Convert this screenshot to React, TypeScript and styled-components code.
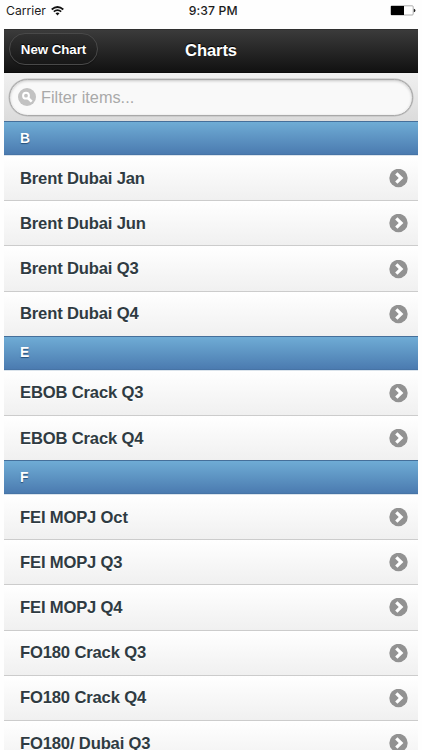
import React from "react";
import styled, { createGlobalStyle } from "styled-components";

const GlobalStyle = createGlobalStyle`
  * { box-sizing: border-box; }
  html, body { margin: 0; background: #fff; }
  body { font-family: "Liberation Sans", Arial, sans-serif; overflow: hidden; }
`;

const Screen = styled.div`
  width: 422px;
  height: 750px;
  overflow: hidden;
  background: #fefefe;
`;

const StatusBar = styled.div`
  height: 28.5px;
  padding: 0 6px 6.5px;
  display: grid;
  grid-template-columns: 1fr auto 1fr;
  align-items: center;
  color: #1c1c1c;
`;

const Carrier = styled.div`
  display: flex;
  align-items: center;
  gap: 5px;
  font: 12.2px/22px Inter, sans-serif;
  letter-spacing: 0;
`;

const Clock = styled.div`
  padding-left: 4.5px;
  font: 500 12.2px/22px Inter, sans-serif;
  letter-spacing: 0.15px;
`;

const BatteryIcon = styled.svg`
  justify-self: end;
  margin-top: -1px;
`;

const Page = styled.main`
  margin: 0 4px;
  width: 414px;
`;

const Header = styled.header`
  height: 44.7px;
  padding: 0 5px;
  display: grid;
  grid-template-columns: 1fr auto 1fr;
  align-items: center;
  color: #fff;
  border-top: 1px solid #303030;
  border-bottom: 1px solid #0b0b0b;
  background: linear-gradient(#3b3b3b, #111);
  text-shadow: 0 -1px 1px #000;
`;

const Title = styled.h1`
  margin: 0;
  font-size: 16.6px;
  line-height: 22px;
  font-weight: 700;
  letter-spacing: -0.1px;
`;

const HeaderButton = styled.button`
  justify-self: start;
  width: 89px;
  height: 32px;
  margin-top: -4px;
  padding: 1px 0 0;
  border: 1px solid #494949;
  border-radius: 16px;
  background: linear-gradient(#303030, #171717);
  color: #fff;
  font: 700 13.3px "Liberation Sans", Arial, sans-serif;
  letter-spacing: -0.05px;
  text-shadow: 0 -1px 1px #000;
  box-shadow: 0 1px 1px rgba(0, 0, 0, 0.3);
`;

const FilterBar = styled.div`
  height: 48px;
  padding: 5.5px 5px 0;
  background: linear-gradient(#f0f0f0, #dbdbdb);
`;

const SearchField = styled.label`
  height: 37px;
  padding: 0 8px;
  display: flex;
  align-items: center;
  gap: 5px;
  border: 1px solid #a9a9a9;
  border-radius: 19px;
  background: #f9f9f9;
  box-shadow: inset 0 1px 3px rgba(0, 0, 0, 0.2), 0 0 0 0.5px #bbb;
`;

const SearchInput = styled.input`
  flex: 1;
  min-width: 0;
  padding: 1px 0 0;
  border: 0;
  outline: 0;
  background: transparent;
  font: 16.3px "Liberation Sans", Arial, sans-serif;
  &::placeholder { color: #a9a9a9; opacity: 1; }
`;

const List = styled.ul`
  list-style: none;
  margin: 0;
  padding: 0;
`;

const Divider = styled.li`
  height: 33.9px;
  padding: 0 16px;
  display: flex;
  align-items: center;
  border-top: 1px solid #456f9a;
  border-bottom: 1px solid #4774a6;
  background: linear-gradient(#6facd5, #4b7bb0);
  color: #fff;
  font-size: 13.8px;
  font-weight: 700;
  text-shadow: 0 1px 1px #254f7a;
`;

const Row = styled.li`
  height: 45.2px;
  padding: 1px 10px 0 16px;
  display: flex;
  align-items: center;
  justify-content: space-between;
  border-top: 1px solid #ccc;
  background: linear-gradient(#fff, #f0f0f0);
  color: #2f3b42;
  font-size: 16.6px;
  letter-spacing: -0.16px;
  font-weight: 700;
  text-shadow: 0 1px 0 #fff;
  ${Divider} + & { border-top-color: #dbe4ec; }
`;

const sections = [
  { letter: "B", items: ["Brent Dubai Jan", "Brent Dubai Jun", "Brent Dubai Q3", "Brent Dubai Q4"] },
  { letter: "E", items: ["EBOB Crack Q3", "EBOB Crack Q4"] },
  { letter: "F", items: ["FEI MOPJ Oct", "FEI MOPJ Q3", "FEI MOPJ Q4", "FO180 Crack Q3", "FO180 Crack Q4", "FO180/ Dubai Q3"] },
];

const WifiIcon = () => (
  <svg width="13" height="10" viewBox="0 0 13 10" fill="none" stroke="#111" strokeWidth="1.7">
    <path d="M.7 3.5Q6.5-1.5 12.3 3.5" />
    <path d="M2.8 5.7Q6.5 2.5 10.2 5.7" />
    <path d="M6.5 9.5 4.5 7.3Q6.5 5.8 8.5 7.3Z" fill="#111" stroke="none" />
  </svg>
);

const SearchIcon = () => (
  <svg width="18" height="18" viewBox="0 0 18 18" fill="none">
    <circle cx="9" cy="9" r="9" fill="#c2c2c2" />
    <circle cx="8" cy="7.7" r="2.9" stroke="#fff" strokeWidth="2" />
    <path d="m10 10 3.7 3.7" stroke="#fff" strokeWidth="2.6" />
  </svg>
);

const ArrowIcon = () => (
  <svg width="19" height="19" viewBox="0 0 19 19" fill="none">
    <circle cx="9.5" cy="9" r="9.2" fill="#929292" />
    <path d="m7.3 4.3 4.8 4.7-4.8 4.7" stroke="#fff" strokeWidth="3.2" />
  </svg>
);

export default function App() {
  return (
    <Screen>
      <GlobalStyle />
      <StatusBar>
        <Carrier>Carrier <WifiIcon /></Carrier>
        <Clock>9:37 PM</Clock>
        <BatteryIcon width="26" height="11" viewBox="0 0 26 11">
          <rect x=".8" y=".8" width="22.4" height="9.2" rx="1" fill="#fff" stroke="#999" strokeWidth=".8" />
          <path d="M1 1h13v9H1z" fill="#000" />
          <path d="M23.8 3.8q1.6.2 1.6 1.7t-1.6 1.7z" fill="#222" />
        </BatteryIcon>
      </StatusBar>
      <Page>
        <Header>
          <HeaderButton>New Chart</HeaderButton>
          <Title>Charts</Title>
        </Header>
        <FilterBar>
          <SearchField>
            <SearchIcon />
            <SearchInput placeholder="Filter items..." />
          </SearchField>
        </FilterBar>
        <List>
          {sections.map(({ letter, items }) => (
            <React.Fragment key={letter}>
              <Divider>{letter}</Divider>
              {items.map((item) => (
                <Row key={item}>{item}<ArrowIcon /></Row>
              ))}
            </React.Fragment>
          ))}
        </List>
      </Page>
    </Screen>
  );
}
